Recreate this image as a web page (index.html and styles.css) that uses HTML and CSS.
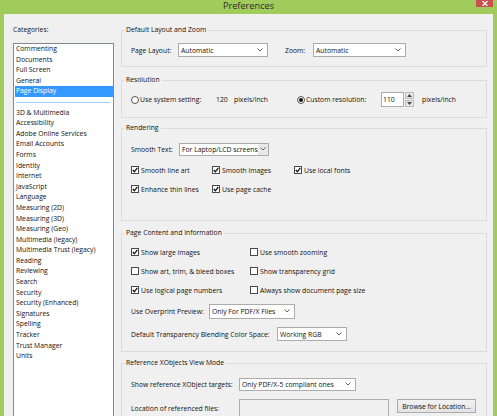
FILE: index.html
```html
<!DOCTYPE html>
<html lang="en">
<head>
    <meta charset="UTF-8">
    <title>Preferences</title>
    <link rel="stylesheet" href="styles.css">
</head>
<body>
    <div class="window">
        <div class="titlebar">
            <span class="title">Preferences</span>
            <span class="close">
                <svg width="6" height="5" viewBox="0 0 6 5"><path d="M0.5 0 L5.5 5 M5.5 0 L0.5 5" stroke="#fff" stroke-width="1.2"/></svg>
            </span>
        </div>

        <div class="content">
            <!-- left: category list -->
            <div class="sidebar">
                <div class="cat-label">Categories:</div>
                <ul class="listbox">
                    <li>Commenting</li>
                    <li>Documents</li>
                    <li>Full Screen</li>
                    <li>General</li>
                    <li class="selected">Page Display</li>
                    <li class="sep"></li>
                    <li>3D &amp; Multimedia</li>
                    <li>Accessibility</li>
                    <li>Adobe Online Services</li>
                    <li>Email Accounts</li>
                    <li>Forms</li>
                    <li>Identity</li>
                    <li>Internet</li>
                    <li>JavaScript</li>
                    <li>Language</li>
                    <li>Measuring (2D)</li>
                    <li>Measuring (3D)</li>
                    <li>Measuring (Geo)</li>
                    <li>Multimedia (legacy)</li>
                    <li>Multimedia Trust (legacy)</li>
                    <li>Reading</li>
                    <li>Reviewing</li>
                    <li>Search</li>
                    <li>Security</li>
                    <li>Security (Enhanced)</li>
                    <li>Signatures</li>
                    <li>Spelling</li>
                    <li>Tracker</li>
                    <li>Trust Manager</li>
                    <li>Units</li>
                </ul>
            </div>

            <!-- right: settings groups -->
            <div class="panel">
                <fieldset class="group g-layout">
                    <legend>Default Layout and Zoom</legend>
                    <div class="row">
                        <span class="lbl" style="width:47px">Page Layout:</span>
                        <div class="select" style="width:90px">
                            <span>Automatic</span>
                            <svg class="chev" width="6" height="4" viewBox="0 0 6 4"><path d="M0.5 0.5 L3 3 L5.5 0.5" fill="none" stroke="#666"/></svg>
                        </div>
                        <span class="lbl zoom-lbl">Zoom:</span>
                        <div class="select" style="width:93px">
                            <span>Automatic</span>
                            <svg class="chev" width="6" height="4" viewBox="0 0 6 4"><path d="M0.5 0.5 L3 3 L5.5 0.5" fill="none" stroke="#666"/></svg>
                        </div>
                    </div>
                </fieldset>

                <fieldset class="group g-res">
                    <legend>Resolution</legend>
                    <div class="row row-res">
                        <label class="opt" style="width:85px"><span class="radio"></span>Use system setting:</label>
                        <span style="width:18px">120</span>
                        <span style="width:63px">pixels/inch</span>
                        <label class="opt" style="width:84px"><span class="radio on"></span>Custom resolution:</label>
                        <div class="spin">
                            <div class="spin-input">110</div>
                            <div class="spin-btns">
                                <span><svg width="5" height="3" viewBox="0 0 5 3"><path d="M0 3 L2.5 0 L5 3 Z" fill="#444"/></svg></span>
                                <span><svg width="5" height="3" viewBox="0 0 5 3"><path d="M0 0 L2.5 3 L5 0 Z" fill="#444"/></svg></span>
                            </div>
                        </div>
                        <span class="unit">pixels/inch</span>
                    </div>
                </fieldset>

                <fieldset class="group g-render">
                    <legend>Rendering</legend>
                    <div class="row">
                        <span class="lbl" style="width:48px">Smooth Text:</span>
                        <div class="select with-btn" style="width:90px;height:13px">
                            <span>For Laptop/LCD screens</span>
                            <span class="drop"><svg width="6" height="4" viewBox="0 0 6 4"><path d="M0.5 0.5 L3 3 L5.5 0.5" fill="none" stroke="#666"/></svg></span>
                        </div>
                    </div>
                    <div class="checks checks-3">
                        <label class="opt"><span class="box"><svg width="6" height="6" viewBox="0 0 6 6"><path d="M0.8 3 L2.4 4.8 L5.3 0.9" fill="none" stroke="#111" stroke-width="1.3"/></svg></span>Smooth line art</label>
                        <label class="opt"><span class="box"><svg width="6" height="6" viewBox="0 0 6 6"><path d="M0.8 3 L2.4 4.8 L5.3 0.9" fill="none" stroke="#111" stroke-width="1.3"/></svg></span>Smooth images</label>
                        <label class="opt"><span class="box"><svg width="6" height="6" viewBox="0 0 6 6"><path d="M0.8 3 L2.4 4.8 L5.3 0.9" fill="none" stroke="#111" stroke-width="1.3"/></svg></span>Use local fonts</label>
                    </div>
                    <div class="checks checks-3 last">
                        <label class="opt"><span class="box"><svg width="6" height="6" viewBox="0 0 6 6"><path d="M0.8 3 L2.4 4.8 L5.3 0.9" fill="none" stroke="#111" stroke-width="1.3"/></svg></span>Enhance thin lines</label>
                        <label class="opt"><span class="box"><svg width="6" height="6" viewBox="0 0 6 6"><path d="M0.8 3 L2.4 4.8 L5.3 0.9" fill="none" stroke="#111" stroke-width="1.3"/></svg></span>Use page cache</label>
                    </div>
                </fieldset>

                <fieldset class="group g-content">
                    <legend>Page Content and Information</legend>
                    <div class="checks checks-2">
                        <label class="opt"><span class="box"><svg width="6" height="6" viewBox="0 0 6 6"><path d="M0.8 3 L2.4 4.8 L5.3 0.9" fill="none" stroke="#111" stroke-width="1.3"/></svg></span>Show large images</label>
                        <label class="opt"><span class="box"></span>Use smooth zooming</label>
                    </div>
                    <div class="checks checks-2">
                        <label class="opt"><span class="box"></span>Show art, trim, &amp; bleed boxes</label>
                        <label class="opt"><span class="box"></span>Show transparency grid</label>
                    </div>
                    <div class="checks checks-2 gap-7">
                        <label class="opt"><span class="box"><svg width="6" height="6" viewBox="0 0 6 6"><path d="M0.8 3 L2.4 4.8 L5.3 0.9" fill="none" stroke="#111" stroke-width="1.3"/></svg></span>Use logical page numbers</label>
                        <label class="opt"><span class="box"></span>Always show document page size</label>
                    </div>
                    <div class="row gap-9">
                        <span class="lbl" style="width:78px">Use Overprint Preview:</span>
                        <div class="select" style="width:86px;height:15px">
                            <span>Only For PDF/X Files</span>
                            <svg class="chev" width="6" height="4" viewBox="0 0 6 4"><path d="M0.5 0.5 L3 3 L5.5 0.5" fill="none" stroke="#666"/></svg>
                        </div>
                    </div>
                    <div class="row">
                        <span class="lbl" style="width:146px">Default Transparency Blending Color Space:</span>
                        <div class="select" style="width:70px">
                            <span>Working RGB</span>
                            <svg class="chev" width="6" height="4" viewBox="0 0 6 4"><path d="M0.5 0.5 L3 3 L5.5 0.5" fill="none" stroke="#666"/></svg>
                        </div>
                    </div>
                </fieldset>

                <fieldset class="group g-xobj">
                    <legend>Reference XObjects View Mode</legend>
                    <div class="row">
                        <span class="lbl" style="width:108px">Show reference XObject targets:</span>
                        <div class="select" style="width:117px;height:13px">
                            <span>Only PDF/X-5 compliant ones</span>
                            <svg class="chev" width="6" height="4" viewBox="0 0 6 4"><path d="M0.5 0.5 L3 3 L5.5 0.5" fill="none" stroke="#666"/></svg>
                        </div>
                    </div>
                    <div class="row row-loc">
                        <span class="lbl" style="width:108px">Location of referenced files:</span>
                        <div class="path-input"></div>
                        <button class="btn">Browse for Location...</button>
                    </div>
                </fieldset>
            </div>
        </div>
    </div>
</body>
</html>
```

FILE: styles.css
```css
* {
    margin: 0;
    padding: 0;
    box-sizing: border-box;
}

body {
    font-family: "Open Sans", "Liberation Sans", sans-serif;
    font-size: 6.8px;
    color: #111;
    background: #a1cb5b;
    overflow: hidden;
}

.window {
    width: 497px;
    height: 416px;
    padding: 0 4px;
}

.titlebar {
    height: 14px;
    display: grid;
    grid-template-columns: 1fr auto 1fr;
}

.title {
    grid-column: 2;
    font-size: 9.2px;
    line-height: 12px;
    color: #2b2b2b;
}

.close {
    grid-column: 3;
    justify-self: end;
    width: 17px;
    height: 7px;
    background: #c75050;
    display: flex;
    justify-content: center;
    align-items: flex-end;
}

.close svg {
    display: block;
    margin-bottom: 1px;
}

.content {
    background: #f0f0f0;
    height: 402px;
    display: flex;
    gap: 7px;
    padding: 11px 6px 0 9px;
}

/* category list */
.sidebar {
    width: 101px;
    flex-shrink: 0;
}

.cat-label {
    line-height: 10px;
    margin-bottom: 8px;
}

.listbox {
    list-style: none;
    height: 380px;
    background: #fff;
    border: 1px solid #828790;
    padding-left: 1px;
}

.listbox li {
    height: 10.6px;
    line-height: 10.6px;
    padding-left: 1px;
    white-space: nowrap;
}

.listbox li.selected {
    background: #3399ff;
    color: #fff;
}

.listbox li.sep {
    display: flex;
    align-items: center;
    padding: 0 3px 0 1px;
}

.listbox li.sep::after {
    content: "";
    flex: 1;
    height: 1px;
    background: #9fcbf2;
}

/* settings panel */
.panel {
    width: 366px;
    flex-shrink: 0;
}

.group {
    border: 1px solid #dcdcdc;
    padding: 0 8px 0 9px;
    min-width: 0;
}

.group legend {
    line-height: 10px;
    padding: 0 2px;
    margin-left: -7px;
}

.g-layout { padding-top: 8px; padding-bottom: 9px; margin-bottom: 8px; }
.g-res { padding-top: 7px; padding-bottom: 10px; margin-bottom: 5px; }
.g-render { padding-top: 9px; padding-bottom: 24px; margin-bottom: 7px; }
.g-content { padding-top: 7px; padding-bottom: 10px; margin-bottom: 6px; }
.g-xobj { padding-top: 9px; padding-bottom: 10px; }

.row {
    display: flex;
    align-items: center;
    height: 14px;
    white-space: nowrap;
}

.lbl {
    flex-shrink: 0;
}

.zoom-lbl {
    width: 28px;
    margin-left: 17px;
}

.select {
    display: flex;
    align-items: center;
    justify-content: space-between;
    height: 14px;
    padding: 0 4px 0 2px;
    background: #fff;
    border: 1px solid #acacac;
    flex-shrink: 0;
    overflow: hidden;
}

.chev {
    display: block;
    flex-shrink: 0;
}

.select.with-btn {
    padding-right: 0;
}

.select.with-btn .drop {
    width: 10px;
    height: 100%;
    display: flex;
    align-items: center;
    justify-content: center;
    background: #e8e8e8;
}

/* radios and checkboxes */
.opt {
    display: flex;
    align-items: center;
    white-space: nowrap;
}

.radio {
    width: 8px;
    height: 8px;
    border: 1px solid #555;
    border-radius: 50%;
    background: #fff;
    margin-right: 1px;
    display: flex;
    align-items: center;
    justify-content: center;
}

.radio.on::after {
    content: "";
    width: 4px;
    height: 4px;
    border-radius: 50%;
    background: #111;
}

.box {
    width: 8px;
    height: 8px;
    border: 1px solid #4a4a4a;
    background: #fff;
    margin-right: 2px;
    display: flex;
    align-items: center;
    justify-content: center;
    flex-shrink: 0;
}

.box svg {
    display: block;
}

.checks {
    display: grid;
    height: 14px;
    align-items: center;
    margin-bottom: 5px;
}

.checks-3 {
    grid-template-columns: 81px 82px auto;
    margin-bottom: 5px;
}

.g-render .row {
    margin-bottom: 7px;
}

.checks.last {
    margin-bottom: 0;
}

.checks-2 {
    grid-template-columns: 119px auto;
}

.gap-7 {
    margin-bottom: 7px;
}

.gap-9 {
    margin-bottom: 9px;
}

/* resolution row */
.row-res {
    height: 15px;
}

.spin {
    display: flex;
    gap: 1px;
    height: 15px;
    flex-shrink: 0;
}

.spin-input {
    width: 23px;
    height: 15px;
    background: #fff;
    border: 1px solid #acacac;
    padding-left: 1px;
    line-height: 13px;
}

.spin-btns {
    width: 9px;
    display: flex;
    flex-direction: column;
    gap: 1px;
}

.spin-btns span {
    flex: 1;
    background: #e9e9e9;
    border: 1px solid #bdbdbd;
    display: flex;
    align-items: center;
    justify-content: center;
}

.spin-btns svg {
    display: block;
}

.unit {
    margin-left: 8px;
}

/* xobject group */
.g-xobj .row {
    margin-bottom: 8px;
}

.g-xobj .row-loc {
    height: 18px;
    margin-bottom: 0;
}

.path-input {
    width: 150px;
    height: 18px;
    background: #f0f0f0;
    border: 1px solid #adadad;
    align-self: flex-start;
    flex-shrink: 0;
}

.btn {
    align-self: flex-start;
    margin-left: 8px;
    width: 79px;
    height: 14px;
    font-family: inherit;
    font-size: inherit;
    color: #111;
    background: linear-gradient(#f2f2f2, #e3e3e3);
    border: 1px solid #acacac;
}
```
